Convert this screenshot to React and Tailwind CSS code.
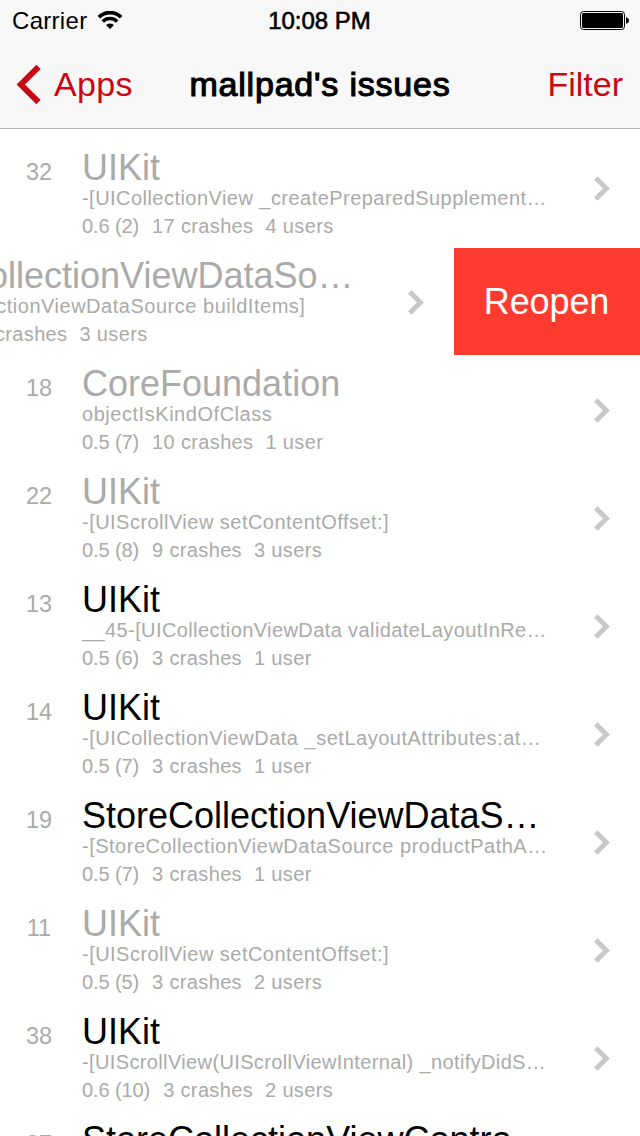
import React from "react";

const issues = [
  { id: "32", title: "UIKit", closed: true, raised: true, symbol: "-[UICollectionView _createPreparedSupplement…", tracking: "tracking-[0.46px]", stats: ["0.6 (2)", "17 crashes", "4 users"] },
  { id: "16", title: "MallCollectionViewDataSo…", closed: true, swiped: true, symbol: "-[MallCollectionViewDataSource buildItems]", tracking: "tracking-[0.52px]", stats: ["0.5 (7)", "12 crashes", "3 users"] },
  { id: "18", title: "CoreFoundation", closed: true, symbol: "objectIsKindOfClass", tracking: "tracking-[0.54px]", stats: ["0.5 (7)", "10 crashes", "1 user"] },
  { id: "22", title: "UIKit", closed: true, symbol: "-[UIScrollView setContentOffset:]", tracking: "tracking-[0.47px]", stats: ["0.5 (8)", "9 crashes", "3 users"] },
  { id: "13", title: "UIKit", symbol: "__45-[UICollectionViewData validateLayoutInRe…", tracking: "tracking-[0.4px]", stats: ["0.5 (6)", "3 crashes", "1 user"] },
  { id: "14", title: "UIKit", symbol: "-[UICollectionViewData _setLayoutAttributes:at…", tracking: "tracking-[0.51px]", stats: ["0.5 (7)", "3 crashes", "1 user"] },
  { id: "19", title: "StoreCollectionViewDataS…", symbol: "-[StoreCollectionViewDataSource productPathA…", tracking: "tracking-[0.5px]", stats: ["0.5 (7)", "3 crashes", "1 user"] },
  { id: "11", title: "UIKit", closed: true, symbol: "-[UIScrollView setContentOffset:]", tracking: "tracking-[0.47px]", stats: ["0.5 (5)", "3 crashes", "2 users"] },
  { id: "38", title: "UIKit", symbol: "-[UIScrollView(UIScrollViewInternal) _notifyDidS…", tracking: "tracking-[0.37px]", stats: ["0.6 (10)", "3 crashes", "2 users"] },
  { id: "27", title: "StoreCollectionViewContro…", symbol: "", tracking: "", stats: [] },
];

function Chevron({ raised }) {
  return (
    <svg className={`${raised ? "mt-9" : "mt-[42px]"} h-[25px] w-4 shrink-0`} viewBox="0 0 16 25" fill="none">
      <path d="M1.8 1.9 12.4 12.5 1.8 23.1" stroke="#c7c7cc" strokeWidth="4.9" />
    </svg>
  );
}

function IssueRow({ issue }) {
  const [version, crashes, users] = issue.stats;
  return (
    <li className={`flex h-[108px] w-full shrink-0 ${issue.swiped ? "justify-end" : ""}`}>
      <div className="flex w-[640px] shrink-0 text-[#aaaaaa]">
        <div className="mr-1 w-[78px] shrink-0 pt-[15px] text-center text-[23.5px] leading-[35px]">{issue.id}</div>
        <div className="w-[512px] shrink-0 whitespace-nowrap pt-2.5">
          <div className={`text-4xl leading-9 ${issue.closed ? "" : "text-black"}`}>{issue.title}</div>
          <div className={`h-6 text-xl leading-6 ${issue.tracking}`}>{issue.symbol}</div>
          <div className="flex text-xl leading-8">
            <span className="mr-[13px] tracking-[-0.1px]">{version}</span>
            <span className="mr-[12px] tracking-[0.35px]">{crashes}</span>
            <span className="tracking-[0.35px]">{users}</span>
          </div>
        </div>
        <Chevron raised={issue.raised} />
      </div>
      {issue.swiped && (
        <button className="h-[107px] w-[186px] shrink-0 bg-[#ff3b30] pr-px text-4xl tracking-[-0.1px] text-white">Reopen</button>
      )}
    </li>
  );
}

function StatusBar() {
  return (
    <div className="grid h-10 grid-cols-3 text-2xl leading-[42px]">
      <div className="flex pl-3">
        <span className="tracking-[0.3px]">Carrier</span>
        <svg className="ml-[10px] mt-[11px] h-[18px] w-[26px]" viewBox="0 0 26 18" fill="none" stroke="#000">
          <path d="M1.9 6.2a15.8 15.8 0 0 1 22.2 0" strokeWidth="3.7" />
          <path d="M5.8 10.5a10.2 10.2 0 0 1 14.4 0" strokeWidth="3.4" />
          <path d="M9 14a5.8 5.8 0 0 1 8 0L13 18Z" fill="#000" stroke="none" />
        </svg>
      </div>
      <div className="whitespace-nowrap pr-px text-center [-webkit-text-stroke:0.6px_black]">10:08 PM</div>
      <div className="flex justify-end pr-[11px]">
        <svg className="mt-[11px] h-[19px] w-[49px]" viewBox="0 0 49 19">
          <rect x="0.5" y="0.5" width="44" height="18" rx="3" fill="none" stroke="#000" />
          <rect x="2" y="2" width="41" height="15" rx="1.5" />
          <path d="M46 6.3c4 .6 4 5.8 0 6.4Z" />
        </svg>
      </div>
    </div>
  );
}

export default function App() {
  return (
    <div className="flex h-[1136px] w-[640px] flex-col overflow-hidden bg-white font-['Liberation_Sans',Arial,sans-serif] text-black">
      <header className="h-[129px] shrink-0 border-b border-[#b2b2b2] bg-[#f7f7f7]">
        <StatusBar />
        <nav className="flex h-[88px] justify-between whitespace-nowrap px-4 text-[34px] leading-[88px]">
          <button className="flex w-[150px] text-[#c80813]">
            <svg className="mt-6 h-[41px] w-[25px]" viewBox="0 0 25 41" fill="none">
              <path d="M22.5 2.8 4.8 20.5 22.5 38.2" stroke="#c80813" strokeWidth="6" />
            </svg>
            <span className="ml-[13px] tracking-[0.3px]">Apps</span>
          </button>
          <h1 className="tracking-[0.8px] [-webkit-text-stroke:1.1px_black]">mallpad's issues</h1>
          <button className="w-[150px] pr-px text-right text-[#c80813]">Filter</button>
        </nav>
      </header>
      <ul className="flex flex-col pt-[11px]">
        {issues.map((issue) => (
          <IssueRow key={issue.id} issue={issue} />
        ))}
      </ul>
    </div>
  );
}
